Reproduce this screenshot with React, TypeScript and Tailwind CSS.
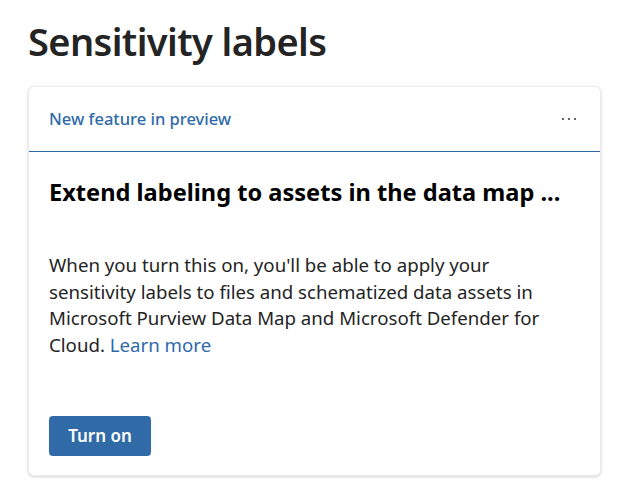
export default function App() {
  return (
    <div className="min-h-screen bg-white pl-7 pr-5 font-['Noto_Sans',sans-serif] text-[#242424]">
      <h1 className="pt-[15px] text-[38px] font-semibold leading-[52px] tracking-[-0.6px]">
        Sensitivity labels
      </h1>

      <div className="mt-[19px] h-[390px] rounded-md border border-[#ececec] bg-white shadow-[0_1px_3px_rgba(0,0,0,0.18)]">
        {/* header */}
        <div className="flex h-[65px] items-center justify-between border-b-[1.5px] border-[#2f6aa8] pl-5 pr-6">
          <span className="text-[16.5px] font-medium text-[#2f6aa8]">New feature in preview</span>
          <div className="flex items-center gap-1">
            <span className="h-[2px] w-[2px] rounded-full bg-[#333]" />
            <span className="h-[2px] w-[2px] rounded-full bg-[#333]" />
            <span className="h-[2px] w-[2px] rounded-full bg-[#333]" />
          </div>
        </div>

        <div className="px-5">
          <h2 className="mt-[24px] text-[23.6px] font-bold leading-[32px] text-black">
            Extend labeling to assets in the data map ...
          </h2>
          <p className="mt-[44px] text-[18.67px] leading-[26.67px]">
            When you turn this on, you'll be able to apply your sensitivity labels to files and
            schematized data assets in Microsoft Purview Data Map and Microsoft Defender for Cloud.{" "}
            <a className="text-[#2f6aa8]">Learn more</a>
          </p>
          <button className="mt-[57px] h-10 w-[102px] rounded-[4px] bg-[#306ba8] text-[17px] font-semibold text-white">
            Turn on
          </button>
        </div>
      </div>
    </div>
  );
}
